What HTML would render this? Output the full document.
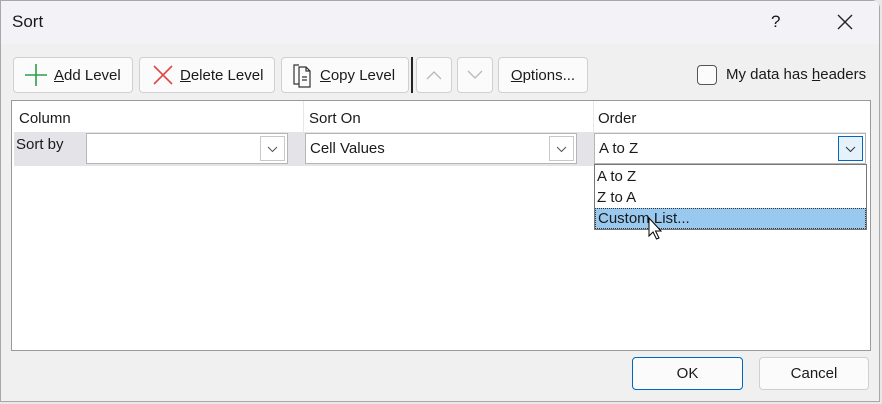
<!DOCTYPE html>
<html><head><style>
*{box-sizing:border-box;margin:0;padding:0}
body{width:882px;height:404px;background:#e8e8e8;font-family:"Liberation Sans",sans-serif;font-size:15px;color:#1a1a1a;position:relative;overflow:hidden}
.dlg{position:absolute;left:0;top:0;width:880px;height:402px;background:#f0f0f0;box-shadow:inset 0 0 0 1px #a8a8a8;border-radius:0 8px 0 0;overflow:hidden}
.title{position:absolute;left:1px;top:1px;width:878px;height:43px;background:#f3f2f7}
.a{position:absolute}
.btn{position:absolute;background:#fbfbfb;border:1px solid #d0d0d0;border-radius:4px;display:flex;align-items:center;justify-content:center;font-size:15px}
u{text-decoration:underline}
.grid{position:absolute;left:11px;top:100px;width:860px;height:251px;background:#fff;border:1px solid #9a9a9a}
.combo{position:absolute;background:#fff;border:1px solid #b5b5b5;height:31px;font-size:15px;padding:6px 4px}
.dd{position:absolute;top:2px;right:2px;width:25px;height:25px;border:1px solid #c8c8c8;background:#fff}
</style></head><body>
<div class="dlg">
<div class="title"></div>
<div class="a" style="left:12px;top:12px;font-size:17px">Sort</div>
<div class="a" style="left:771px;top:12px;font-size:17px">?</div>
<svg class="a" style="left:837px;top:14px" width="16" height="16"><path d="M1 1L15 15M15 1L1 15" stroke="#222" stroke-width="1.4"/></svg>

<div class="btn" style="left:13px;top:57px;width:120px;height:36px;justify-content:flex-start;padding-left:10px">
<svg width="24" height="24" style="margin-right:6px"><path d="M12 1V23M1 12H23" stroke="#2e9e48" stroke-width="1.6"/></svg><span><u>A</u>dd Level</span></div>
<div class="btn" style="left:139px;top:57px;width:136px;height:36px;justify-content:flex-start;padding-left:12px">
<svg width="22" height="22" style="margin-right:6px"><path d="M2 2L20 20M20 2L2 20" stroke="#e04848" stroke-width="1.6"/></svg><span><u>D</u>elete Level</span></div>
<div class="btn" style="left:281px;top:57px;width:128px;height:36px;justify-content:flex-start;padding-left:10px">
<svg width="26" height="26" style="margin-right:2px"><path d="M7 3H2V22H7M7 5H14L18 9V25H7Z M14 5V9H18 M10 15H15M10 18H15" fill="none" stroke="#333" stroke-width="1.2"/></svg><span><u>C</u>opy Level</span></div>
<div class="a" style="left:411px;top:57px;width:2px;height:36px;background:#222"></div>
<div class="btn" style="left:416px;top:57px;width:36px;height:36px"><svg width="16" height="10"><path d="M1 9L8 2L15 9" fill="none" stroke="#b8b8b8" stroke-width="1.3"/></svg></div>
<div class="btn" style="left:457px;top:57px;width:36px;height:36px"><svg width="16" height="10"><path d="M1 1L8 8L15 1" fill="none" stroke="#b8b8b8" stroke-width="1.3"/></svg></div>
<div class="btn" style="left:498px;top:57px;width:90px;height:36px"><span><u>O</u>ptions...</span></div>
<div class="a" style="left:697px;top:65px;width:20px;height:20px;border:1px solid #555;border-radius:4px;background:#fbfbfb"></div>
<div class="a" style="left:726px;top:66px">My data has <u>h</u>eaders</div>

<div class="grid">
<div class="a" style="left:7px;top:9px">Column</div>
<div class="a" style="left:297px;top:9px">Sort On</div>
<div class="a" style="left:586px;top:9px">Order</div>
<div class="a" style="left:291px;top:0;width:1px;height:31px;background:#e8e8e8"></div>
<div class="a" style="left:581px;top:0;width:1px;height:31px;background:#e8e8e8"></div>
<div class="a" style="left:2px;top:31px;width:852px;height:34px;background:#e4e3e8"></div>
<div class="a" style="left:4px;top:35px">Sort by</div>
<div class="combo" style="left:74px;top:32px;width:202px"><div class="dd"><svg width="23" height="23"><path d="M7 10L11.5 14.5L16 10" fill="none" stroke="#555" stroke-width="1"/></svg></div></div>
<div class="combo" style="left:293px;top:32px;width:272px">Cell Values<div class="dd"><svg width="23" height="23"><path d="M7 10L11.5 14.5L16 10" fill="none" stroke="#555" stroke-width="1"/></svg></div></div>
<div class="combo" style="left:582px;top:32px;width:272px">A to Z<div class="dd" style="border-color:#0067c0;background:#e5f1fb"><svg width="23" height="23"><path d="M7 10L11.5 14.5L16 10" fill="none" stroke="#333" stroke-width="1"/></svg></div></div>
<div class="a" style="left:582px;top:63px;width:273px;height:66px;border:1px solid #777;background:#fff;font-size:15px">
<div class="a" style="left:2px;top:3px">A to Z</div>
<div class="a" style="left:2px;top:24px">Z to A</div>
<div class="a" style="left:0;top:43px;width:271px;height:21px;background:#99c9ef;border:1px dotted #333;padding:0 2px;line-height:19px">Custom List...</div>
</div>
<svg class="a" style="left:636px;top:116px" width="20" height="28"><path d="M1 1V19L5 15L8.5 22L11 21L7.5 14H13Z" fill="#fff" stroke="#000" stroke-width="1"/></svg>
</div>

<div class="btn" style="left:632px;top:357px;width:111px;height:33px;border-color:#0067c0">OK</div>
<div class="btn" style="left:759px;top:357px;width:110px;height:33px">Cancel</div>
</div>
</body></html>
